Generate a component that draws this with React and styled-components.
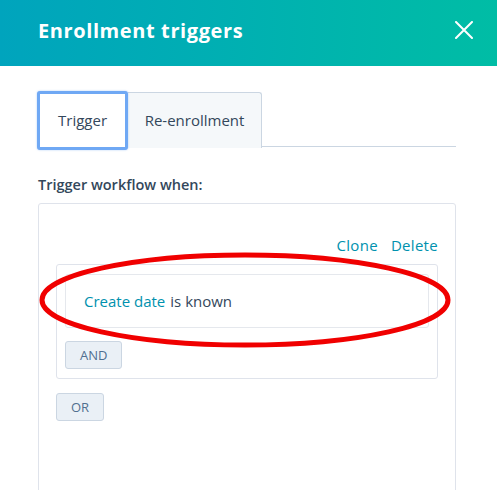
import styled, { createGlobalStyle } from "styled-components";

const GlobalStyle = createGlobalStyle`
  html, body {
    margin: 0;
    padding: 0;
    background: #ffffff;
  }
  body {
    font-family: "Open Sans", "Lato", sans-serif;
    color: #33475b;
    overflow: hidden;
  }
`;

export default function App() {
  return (
    <>
      <GlobalStyle />
      <Panel>
        <Header>
          <Title>Enrollment triggers</Title>
          <CloseButton aria-label="Close">
            <svg width="18" height="18" viewBox="0 0 18 18">
              <path d="M1 1 L17 17 M17 1 L1 17" stroke="#fff" strokeWidth="2" strokeLinecap="round" />
            </svg>
          </CloseButton>
        </Header>

        <Body>
          <Tabs>
            <Tab active>Trigger</Tab>
            <Tab>Re-enrollment</Tab>
          </Tabs>

          <Label>Trigger workflow when:</Label>

          <FilterBox>
            <Actions>
              <ActionLink>Clone</ActionLink>
              <ActionLink>Delete</ActionLink>
            </Actions>
            <Group>
              <Condition>
                <PropertyName>Create date</PropertyName> is known
              </Condition>
              <LogicButton>AND</LogicButton>
            </Group>
            <LogicButton>OR</LogicButton>
          </FilterBox>
        </Body>

        <Highlight width="497" height="490" viewBox="0 0 497 490">
          <ellipse cx="245" cy="300" rx="203" ry="45" fill="none" stroke="#f00000" strokeWidth="5" />
        </Highlight>
      </Panel>
    </>
  );
}

const Panel = styled.div`
  position: relative;
  width: 497px;
  height: 490px;
  overflow: hidden;
`;

const Header = styled.header`
  height: 66px;
  display: flex;
  align-items: center;
  justify-content: space-between;
  padding: 0 24px 0 38px;
  background: linear-gradient(to right, #00a4bd, #00bda5);
  box-sizing: border-box;
`;

const Title = styled.h1`
  margin: 0 0 6px 0;
  font-size: 20px;
  font-weight: 700;
  color: #ffffff;
  letter-spacing: 0.6px;
`;

const CloseButton = styled.button`
  display: flex;
  padding: 0;
  margin-bottom: 6px;
  border: none;
  background: none;
  cursor: pointer;
`;

const Body = styled.div`
  padding: 25px 41px 0 37px;
`;

const Tabs = styled.div`
  display: flex;
  align-items: flex-start;
  height: 55px;
  border-bottom: 1px solid #cbd6e2;
`;

const Tab = styled.div`
  box-sizing: border-box;
  display: flex;
  align-items: center;
  justify-content: center;
  padding-bottom: 2px;
  font-size: 15px;
  font-weight: 500;
  color: #33475b;
  border-radius: 3px;
  ${({ active }) =>
    active
      ? `
    width: 91px;
    height: 59px;
    background: #ffffff;
    border: 3px solid #6fa8f4;
    box-shadow: 0 0 2px rgba(111, 168, 244, 0.6);
    position: relative;
    z-index: 1;
  `
      : `
    width: 134px;
    height: 56px;
    margin-top: 1px;
    background: #f5f8fa;
    border: 1px solid #cbd6e2;
    border-left: none;
    border-bottom: none;
    border-radius: 0 3px 0 0;
  `}
`;

const Label = styled.div`
  margin: 28px 0 9px 1px;
  font-size: 14.5px;
  font-weight: 600;
  color: #33475b;
`;

const FilterBox = styled.div`
  margin-left: 1px;
  height: 320px;
  padding: 31px 17px 0 17px;
  border: 1px solid #dfe3eb;
  border-radius: 3px;
  display: flex;
  flex-direction: column;
  align-items: flex-start;
`;

const Actions = styled.div`
  align-self: flex-end;
  display: flex;
  gap: 13px;
  margin-bottom: 9px;
`;

const ActionLink = styled.a`
  font-size: 15px;
  letter-spacing: 0.3px;
  color: #0091ae;
  cursor: pointer;
`;

const Group = styled.div`
  box-sizing: border-box;
  width: 100%;
  padding: 9px 8px 9px 8px;
  margin-bottom: 14px;
  border: 1px solid #dfe3eb;
  border-radius: 3px;
  display: flex;
  flex-direction: column;
  align-items: flex-start;
  gap: 13px;
`;

const Condition = styled.div`
  box-sizing: border-box;
  width: 100%;
  height: 54px;
  display: flex;
  align-items: center;
  gap: 5px;
  padding-left: 18px;
  border: 1px solid #e5e8ed;
  border-radius: 3px;
  font-size: 15px;
  color: #33475b;
`;

const PropertyName = styled.span`
  color: #0091ae;
`;

const LogicButton = styled.button`
  font-family: inherit;
  font-size: 13px;
  color: #516f90;
  height: 28px;
  padding: 0 14px;
  background: #eaf0f6;
  border: 1px solid #cbd6e2;
  border-radius: 3px;
  cursor: pointer;
`;

const Highlight = styled.svg`
  position: absolute;
  top: 0;
  left: 0;
  pointer-events: none;
`;
